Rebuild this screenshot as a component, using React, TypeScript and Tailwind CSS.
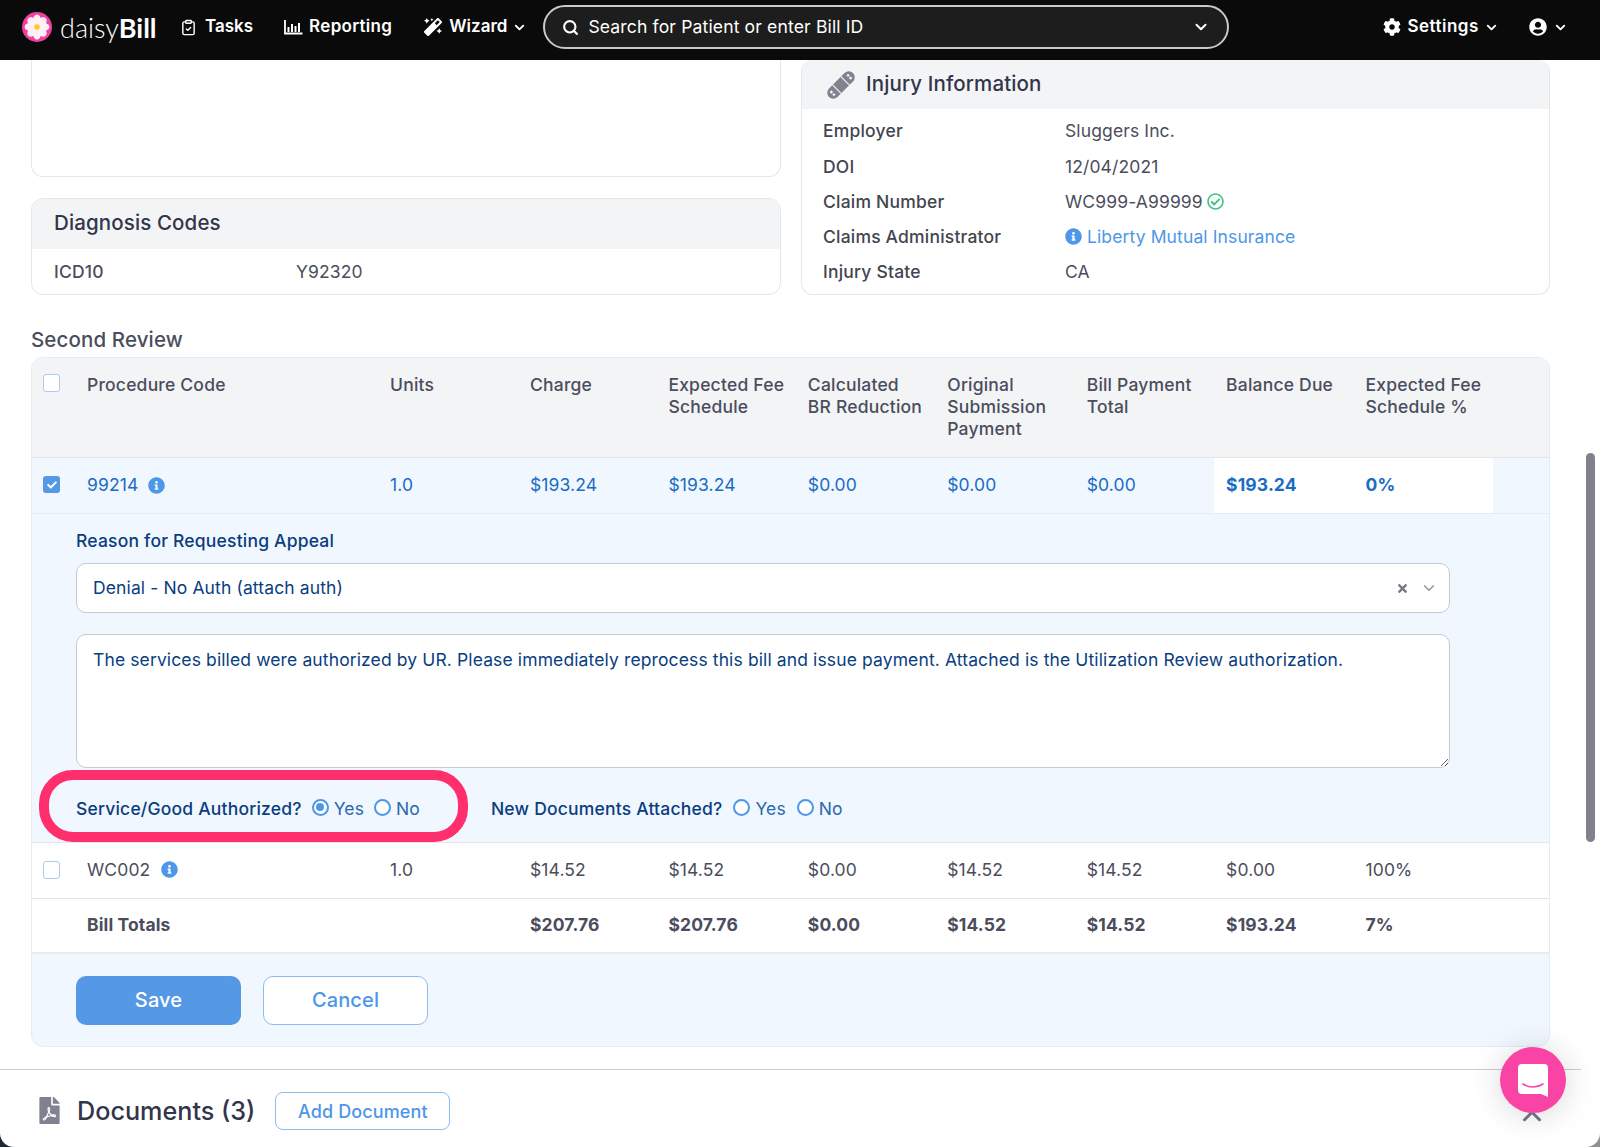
import React from "react";
import { ChevronDown, ChevronUp, ClipboardCheck, Search } from "lucide-react";
import { FaCheck, FaCog, FaFilePdf, FaInfoCircle, FaMagic, FaRegCheckCircle, FaTimes, FaUserCircle } from "react-icons/fa";

const gridCols = "grid grid-cols-[43px_303px_140px_138.43px_repeat(6,139.43px)_1fr]";

function Daisy() {
  const petals = [0, 45, 90, 135, 180, 225, 270, 315];
  return (
    <svg width="30" height="30" viewBox="0 0 30 30" className="shrink-0">
      <circle cx="15" cy="15" r="15" fill="#f0409f" />
      {petals.map((a) => (
        <ellipse key={a} cx="15" cy="7.8" rx="3.9" ry="5.2" fill="#fff0f8" transform={`rotate(${a} 15 15)`} />
      ))}
      <circle cx="15" cy="15" r="2.8" fill="#f7d21c" />
    </svg>
  );
}

function ChartIcon() {
  return (
    <svg width="19" height="16" viewBox="0 0 19 16" fill="none" stroke="white" className="shrink-0">
      <path d="M1 1v13.5h17.5" strokeWidth="1.8" />
      <path d="M4.5 8v5M8 5v8M11.5 7v6M15 4v9" strokeWidth="2" />
    </svg>
  );
}

function BandAid() {
  return (
    <svg width="28" height="28" viewBox="0 0 28 28" className="shrink-0 mr-[11px]">
      <g transform="rotate(-45 14 14)">
        <rect x="-3" y="8" width="34" height="12" rx="6" fill="#80828f" />
        <rect x="7.5" y="8" width="1.2" height="12" fill="#f3f4f6" />
        <rect x="19.3" y="8" width="1.2" height="12" fill="#f3f4f6" />
        <rect x="1" y="11" width="2.4" height="2.4" fill="#f3f4f6" />
        <rect x="1" y="14.6" width="2.4" height="2.4" fill="#f3f4f6" />
        <rect x="24.6" y="11" width="2.4" height="2.4" fill="#f3f4f6" />
        <rect x="24.6" y="14.6" width="2.4" height="2.4" fill="#f3f4f6" />
      </g>
    </svg>
  );
}

function NavItem({ icon, label, chevron, cls }: { icon: React.ReactNode; label: string; chevron?: boolean; cls: string }) {
  return (
    <div className={`flex items-center text-white font-semibold text-[17px] ${cls}`}>
      {icon}
      <span>{label}</span>
      {chevron && <ChevronDown size={15} strokeWidth={3} className="ml-[5px]" />}
    </div>
  );
}

function Nav() {
  return (
    <header className="h-[60px] shrink-0 bg-[#0a0a0a] flex items-center pl-[22px] pb-[6px]">
      <Daisy />
      <div className="ml-[8px] text-[27px] leading-none text-white w-[94px] font-light font-['Lato'] tracking-normal whitespace-nowrap">
        daisy<span className="font-bold">Bill</span>
      </div>
      <NavItem cls="ml-[26px] tracking-normal" label="Tasks" icon={<ClipboardCheck size={17} strokeWidth={2} className="mr-[8px]" />} />
      <NavItem cls="ml-[31px] tracking-[0.3px]" label="Reporting" icon={<span className="mr-[6px] flex"><ChartIcon /></span>} />
      <NavItem cls="ml-[32px] tracking-normal" label="Wizard" chevron icon={<FaMagic size={18} className="mr-[7px]" />} />
      <div className="ml-[16px] w-[686px] h-[44px] rounded-[22px] border-2 border-[#c9c9c9] bg-[#1d1d1d] flex items-center pl-[17px] pr-[17px] text-white text-[17.6px]">
        <Search size={17} strokeWidth={3} className="mr-[9px]" />
        <span className="flex-1">Search for Patient or enter Bill ID</span>
        <ChevronDown size={18} strokeWidth={2.6} />
      </div>
      <NavItem cls="ml-[154px] tracking-[0.5px]" label="Settings" chevron icon={<FaCog size={18} className="mr-[6px]" />} />
      <div className="ml-[30px] flex items-center text-white">
        <FaUserCircle size={18} />
        <ChevronDown size={15} strokeWidth={3} className="ml-[6px]" />
      </div>
    </header>
  );
}

function InfoRow({ label, children }: { label: string; children: React.ReactNode }) {
  return (
    <div className="grid grid-cols-[242px_1fr] h-[35.2px] items-center text-[17.5px] text-[#4b4d5c]">
      <span className="font-medium tracking-[0.2px] text-[#43454f]">{label}</span>
      <span className="flex items-center">{children}</span>
    </div>
  );
}

function TopCards() {
  return (
    <div className="grid grid-cols-[750px_749px] gap-x-[20px] h-[235px]">
      <div className="flex flex-col">
        <div className="h-[117px] border border-t-0 border-[#e4e6ea] rounded-b-[12px]" />
        <div className="mt-[21px] h-[97px] border border-[#e4e6ea] rounded-[12px] overflow-hidden">
          <div className="h-[50px] bg-[#f3f4f6] flex items-center pl-[22px] pb-[2px] text-[20.5px] font-medium text-[#33354a]">Diagnosis Codes</div>
          <div className="grid grid-cols-[242px_1fr] h-[46px] items-center pl-[22px] text-[17.5px] text-[#4b4d5c]">
            <span className="font-medium tracking-[0.2px]">ICD10</span>
            <span>Y92320</span>
          </div>
        </div>
      </div>
      <div className="h-[235px] border border-t-0 border-[#e4e6ea] rounded-[12px] overflow-hidden">
        <div className="h-[49px] bg-[#f3f4f6] flex items-center pl-[25px] text-[20.5px] font-medium text-[#33354a]">
          <BandAid />
          Injury Information
        </div>
        <div className="pl-[21px] pt-[5px]">
          <InfoRow label="Employer">Sluggers Inc.</InfoRow>
          <InfoRow label="DOI">12/04/2021</InfoRow>
          <InfoRow label="Claim Number">
            WC999-A99999
            <FaRegCheckCircle size={17} className="ml-[4px] text-[#3fc088]" />
          </InfoRow>
          <InfoRow label="Claims Administrator">
            <FaInfoCircle size={17} className="text-[#4d97e8] mr-[5px] mb-[2px]" />
            <span className="text-[#4d97e8]">Liberty Mutual Insurance</span>
          </InfoRow>
          <InfoRow label="Injury State">CA</InfoRow>
        </div>
      </div>
    </div>
  );
}

function Box({ checked }: { checked?: boolean }) {
  return checked ? (
    <div className="w-[17px] h-[17px] rounded-[3px] bg-[#5598e6] flex items-center justify-center">
      <FaCheck size={10} className="text-white" />
    </div>
  ) : (
    <div className="w-[17px] h-[18px] rounded-[3px] border border-[#a9cbf2] bg-white" />
  );
}

function Cell({ children, cls = "" }: { children?: React.ReactNode; cls?: string }) {
  return <div className={`pl-[12px] flex items-center ${cls}`}>{children}</div>;
}

function HeadCell({ lines }: { lines: string[] }) {
  return (
    <div className="pl-[12px] pt-[16px] text-[17.5px] leading-[22px] font-medium tracking-[0.2px] text-[#4b4d5c]">
      {lines.map((l) => (
        <div key={l}>{l}</div>
      ))}
    </div>
  );
}

function Radio({ on }: { on?: boolean }) {
  return (
    <span className="w-[17px] h-[17px] mb-[4px] rounded-full border-2 border-[#4d97e8] bg-white flex items-center justify-center shrink-0">
      {on && <span className="w-[8px] h-[8px] rounded-full bg-[#4d97e8]" />}
    </span>
  );
}

function Choice({ on, label, cls }: { on?: boolean; label: string; cls: string }) {
  return (
    <span className={`flex items-center ${cls}`}>
      <Radio on={on} />
      <span className="ml-[5px] text-[#2a69b0]">{label}</span>
    </span>
  );
}

function ReviewTable() {
  return (
    <div className="border border-[#e1edf8] rounded-[12px] overflow-hidden h-[690px] bg-[#f0f7fe] flex flex-col">
      <div className={`${gridCols} h-[100px] bg-[#f3f4f6] border-b border-[#e4e6ea]`}>
        <div className="pl-[11px] pt-[16px]"><Box /></div>
        <HeadCell lines={["Procedure Code"]} />
        <HeadCell lines={["Units"]} />
        <HeadCell lines={["Charge"]} />
        <HeadCell lines={["Expected Fee", "Schedule"]} />
        <HeadCell lines={["Calculated", "BR Reduction"]} />
        <HeadCell lines={["Original", "Submission", "Payment"]} />
        <HeadCell lines={["Bill Payment", "Total"]} />
        <HeadCell lines={["Balance Due"]} />
        <HeadCell lines={["Expected Fee", "Schedule %"]} />
        <div />
      </div>
      <div className={`${gridCols} h-[56px] border-b border-[#e4ecf3] text-[17.5px] text-[#1a6cc4]`}>
        <div className="pl-[11px] pb-[2px] flex items-center"><Box checked /></div>
        <Cell>
          99214
          <FaInfoCircle size={17} className="ml-[10px] mb-[1px] text-[#4d97e8]" />
        </Cell>
        <Cell>1.0</Cell>
        <Cell>$193.24</Cell>
        <Cell>$193.24</Cell>
        <Cell>$0.00</Cell>
        <Cell>$0.00</Cell>
        <Cell>$0.00</Cell>
        <Cell cls="bg-white font-bold">$193.24</Cell>
        <Cell cls="bg-white font-bold">0%</Cell>
        <div />
      </div>
      <div className="h-[329px] pl-[44px] pr-[99px] border-b border-[#e4e6ea] flex flex-col">
        <div className="pt-[15px] h-[49px] shrink-0 text-[17.5px] leading-[24px] font-medium tracking-[0.2px] text-[#0a3d80]">Reason for Requesting Appeal</div>
        <div className="h-[50px] shrink-0 rounded-[10px] border border-[#c6cad0] bg-white flex items-center pl-[16px] pr-[11px] text-[17.5px] text-[#0a3d80]">
          <span className="flex-1">Denial - No Auth (attach auth)</span>
          <FaTimes size={13} className="text-[#777a82] mr-[11px]" />
          <ChevronDown size={18} strokeWidth={1.6} className="text-[#8a8c92]" />
        </div>
        <textarea
          readOnly
          defaultValue="The services billed were authorized by UR. Please immediately reprocess this bill and issue payment. Attached is the Utilization Review authorization."
          className="mt-[21px] h-[134px] shrink-0 rounded-[10px] border border-[#c6cad0] bg-white pl-[16px] pr-[16px] pt-[13px] text-[17.5px] leading-[24px] text-[#0a3d80] outline-none"
        />
        <div className="relative flex items-center mt-[27px] h-[26px] pt-[2px] text-[17.5px]">
          <span className="font-medium tracking-[0.2px] text-[#0a3d80]">Service/Good Authorized?</span>
          <Choice on label="Yes" cls="ml-[10px]" />
          <Choice label="No" cls="ml-[10px]" />
          <span className="ml-[71px] font-medium tracking-[0.2px] text-[#0a3d80]">New Documents Attached?</span>
          <Choice label="Yes" cls="ml-[11px]" />
          <Choice label="No" cls="ml-[11px]" />
          <div className="absolute left-[-37px] top-[-25px] w-[429px] h-[72px] rounded-[34px] border-[10px] border-[#ff2e6d]" />
        </div>
      </div>
      <div className={`${gridCols} h-[56px] bg-white border-b border-[#dfe1e5] text-[17.5px] text-[#4b4d5c]`}>
        <div className="pl-[11px] pb-[2px] flex items-center"><Box /></div>
        <Cell>
          WC002
          <FaInfoCircle size={17} className="ml-[11px] mb-[3px] text-[#4d97e8]" />
        </Cell>
        <Cell>1.0</Cell>
        <Cell>$14.52</Cell>
        <Cell>$14.52</Cell>
        <Cell>$0.00</Cell>
        <Cell>$14.52</Cell>
        <Cell>$14.52</Cell>
        <Cell>$0.00</Cell>
        <Cell>100%</Cell>
        <div />
      </div>
      <div className={`${gridCols} h-[55px] bg-white border-b-2 border-[#e8eaee] text-[17.5px] font-bold text-[#4b4d5c]`}>
        <div />
        <Cell>Bill Totals</Cell>
        <div />
        <Cell>$207.76</Cell>
        <Cell>$207.76</Cell>
        <Cell>$0.00</Cell>
        <Cell>$14.52</Cell>
        <Cell>$14.52</Cell>
        <Cell>$193.24</Cell>
        <Cell>7%</Cell>
        <div />
      </div>
      <div className="flex pl-[44px] pt-[22px] gap-[22px] text-[20px] font-medium">
        <div className="w-[165px] h-[49px] rounded-[10px] bg-[#5598e6] text-white flex items-center justify-center pb-[2px]">Save</div>
        <div className="w-[165px] h-[49px] rounded-[10px] bg-white border border-[#8dbcf0] text-[#4d97e8] flex items-center justify-center pb-[2px]">Cancel</div>
      </div>
    </div>
  );
}

export default function App() {
  return (
    <div className="relative w-[1600px] h-[1147px] overflow-hidden bg-[#1b2a3a] font-['Inter',sans-serif] tracking-[0.12px]">
      <div className="absolute right-0 bottom-0 w-[20px] h-[20px] bg-[#8d9190]" />
      <div className="relative h-full bg-white rounded-b-[14px] overflow-hidden flex flex-col">
        <Nav />
        <main className="pl-[31px] pr-[50px]">
          <TopCards />
          <div className="mt-[30px] h-[32px] text-[20.5px] leading-[30px] font-medium text-[#4b4d5c]">Second Review</div>
          <ReviewTable />
        </main>
        <section className="mt-[22px] w-[1581px] border-t border-[#c9ccd3] flex items-start pt-[22px]">
          <FaFilePdf size={27} className="ml-[36px] mt-[5px] text-[#80828f]" />
          <span className="ml-[14px] mt-[1px] text-[25.2px] leading-[36px] font-medium tracking-normal text-[#33354a]">Documents (3)</span>
          <div className="ml-[20px] w-[175px] h-[38px] rounded-[8px] border border-[#8dbcf0] text-[#4d97e8] text-[18px] font-medium flex items-center justify-center">Add Document</div>
        </section>
        <ChevronUp size={30} strokeWidth={2.4} className="absolute left-[1517px] top-[1101px] text-[#737684]" />
        <div className="absolute left-[1500px] top-[1047px] w-[66px] h-[66px] rounded-full bg-[#f944a5] shadow-[0_2px_32px_rgba(0,0,0,0.16)] flex items-center justify-center">
          <svg width="30" height="33" viewBox="0 0 30 33">
            <path d="M4 0h22a4 4 0 0 1 4 4v29l-7-3H4a4 4 0 0 1-4-4V4a4 4 0 0 1 4-4z" fill="white" />
            <path d="M5 20c6 4 14 4 20 0" fill="none" stroke="#f944a5" strokeWidth="1.6" strokeLinecap="round" />
          </svg>
        </div>
        <div className="absolute left-[1586px] top-[453px] w-[9px] h-[389px] rounded-full bg-[#80818a]" />
      </div>
    </div>
  );
}
